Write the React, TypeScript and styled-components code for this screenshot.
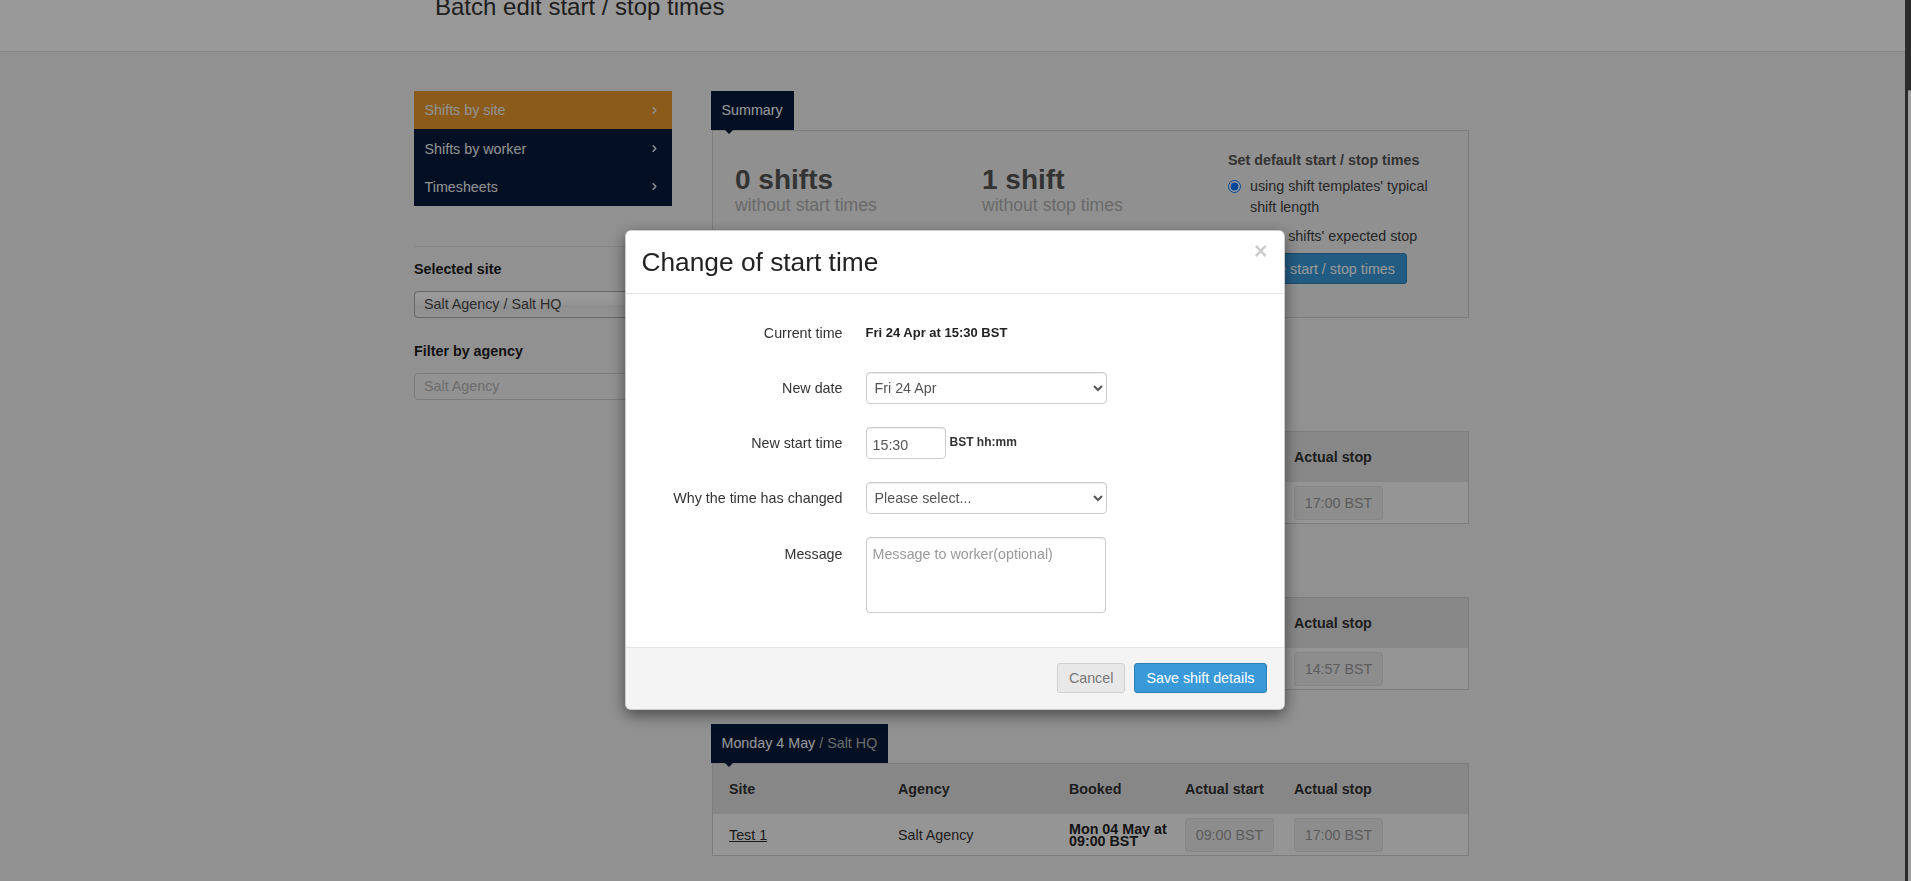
import React from 'react';
import styled, { createGlobalStyle } from 'styled-components';
import { ChevronRight } from 'lucide-react';

const NAVY = '#05193a';
const ORANGE = '#e6982e';

const GlobalStyle = createGlobalStyle`
  * {
    box-sizing: border-box;
  }
  body {
    margin: 0;
    background: #f2f2f2;
    font-family: "Liberation Sans", Arial, sans-serif;
    font-size: 14.3px;
    line-height: 20px;
    color: #333;
  }
`;

const TopBar = styled.header`
  height: 52px;
  background: #fff;
  border-bottom: 1px solid #e2e2e2;
  overflow: hidden;
`;

const PageTitle = styled.h1`
  margin: -5px 0 0 435px;
  font-size: 24px;
  line-height: 24px;
  font-weight: normal;
  color: #333;
`;

const Layout = styled.div`
  display: flex;
  gap: 40px;
  width: 1055px;
  margin-left: 414px;
  padding: 39px 0 25px;
`;

const Sidebar = styled.aside`
  width: 258px;
  flex-shrink: 0;
`;

const NavList = styled.nav`
  display: flex;
  flex-direction: column;
  background: ${NAVY};
`;

const NavItem = styled.a<{ $active?: boolean }>`
  display: flex;
  align-items: center;
  justify-content: space-between;
  height: 38.4px;
  padding: 0 12px 0 10.5px;
  background: ${({ $active }) => ($active ? ORANGE : NAVY)};
  color: #f4f4f4;
  text-decoration: none;
`;

const Divider = styled.hr`
  margin: 40px 0 0;
  border: 0;
  border-top: 1px solid #e0e0e0;
`;

const FieldLabel = styled.div<{ $gap: number }>`
  margin-top: ${({ $gap }) => $gap}px;
  font-weight: bold;
  color: #1c1c1c;
`;

const ChooserBox = styled.div<{ $disabled?: boolean }>`
  margin-top: 12px;
  height: 27px;
  padding: 0 9px;
  line-height: 25px;
  border: 1px solid ${({ $disabled }) => ($disabled ? '#cfcfcf' : '#aaa')};
  border-radius: 4px;
  background: ${({ $disabled }) =>
    $disabled
      ? '#f4f4f4'
      : 'linear-gradient(#fff 20%, #f6f6f6 50%, #eee 52%, #f4f4f4 100%)'};
  color: ${({ $disabled }) => ($disabled ? '#b4b4b4' : '#4a4a4a')};
`;

const Main = styled.main`
  flex: 1;
  display: flex;
  flex-direction: column;
`;

const TabLabel = styled.div`
  position: relative;
  align-self: flex-start;
  height: 39px;
  line-height: 39px;
  margin-left: -1px;
  padding: 0 11px 0 10.5px;
  background: ${NAVY};
  color: #fff;

  &::after {
    content: '';
    position: absolute;
    left: 14px;
    bottom: -4px;
    border-left: 4px solid transparent;
    border-right: 4px solid transparent;
    border-top: 4px solid ${NAVY};
  }
`;

const TabMuted = styled.span`
  color: #b5b5b5;
`;

const Section = styled.section<{ $gap: number }>`
  display: flex;
  flex-direction: column;
  margin-top: ${({ $gap }) => $gap}px;
`;

const SummaryPanel = styled.div`
  display: grid;
  grid-template-columns: 247px 246px 1fr;
  padding: 19px 22px 33px;
  border: 1px solid #d0d0d0;
  background: #f0f0f0;
`;

const Stat = styled.div`
  margin-top: 14px;
`;

const StatValue = styled.div`
  font-size: 28px;
  line-height: 31px;
  font-weight: bold;
  color: #555;
`;

const StatCaption = styled.div`
  font-size: 17.6px;
  line-height: 20px;
  color: #b0b0b0;
`;

const DefaultsColumn = styled.div`
  display: flex;
  flex-direction: column;
`;

const DefaultsHeading = styled.div`
  font-weight: bold;
  color: #555;
`;

const RadioOption = styled.label<{ $gap: number }>`
  display: flex;
  align-items: flex-start;
  gap: 9px;
  margin-top: ${({ $gap }) => $gap}px;
  line-height: 21px;
  color: #404040;

  input {
    width: 13px;
    height: 13px;
    margin: 4px 0 0;
    flex-shrink: 0;
  }
`;

const ActionButton = styled.button`
  align-self: flex-start;
  margin-top: 6px;
  height: 31px;
  padding: 0 11px;
  border: 1px solid #2d7fb4;
  border-radius: 3px;
  background: #3a9ad9;
  color: #fff;
  font: inherit;
`;

const Table = styled.div`
  border: 1px solid #d0d0d0;
  background: #f9f9f9;
`;

const TableRow = styled.div<{ $head?: boolean }>`
  display: grid;
  grid-template-columns: 169px 171px 116px 109px 1fr;
  align-items: center;
  height: ${({ $head }) => ($head ? '50px' : '41px')};
  padding-left: 16px;
  background: ${({ $head }) => ($head ? '#e2e2e2' : '#f9f9f9')};
  font-weight: ${({ $head }) => ($head ? 'bold' : 'normal')};
  color: #333;
`;

const SiteLink = styled.a`
  color: #2c2c2c;
  text-decoration: underline;
`;

const BookedCell = styled.div`
  padding-right: 8px;
  font-weight: bold;
  line-height: 12px;
  color: #222;
`;

const TimeBox = styled.div`
  display: flex;
  align-items: center;
  justify-content: center;
  width: 89px;
  height: 34px;
  border: 1px solid #e0e0e0;
  border-radius: 3px;
  background: #ebebeb;
  color: #9a9a9a;
`;

/* window scrollbar, drawn above the backdrop */

const ScrollTrack = styled.div`
  position: fixed;
  top: 0;
  right: 0;
  bottom: 0;
  width: 6px;
  background: #2b2b2b;
  z-index: 20;
`;

const ScrollThumb = styled.div`
  width: 3px;
  height: 100%;
  margin: 90px 0 0 3px;
  border-radius: 2px 2px 0 0;
  background: #9e9e9e;
`;

/* modal */

const Backdrop = styled.div`
  position: fixed;
  inset: 0;
  background: rgba(0, 0, 0, 0.4);
  z-index: 10;
`;

const Dialog = styled.div`
  width: 660px;
  margin: 230px 0 0 calc(50% - 331px);
  background: #fff;
  border: 1px solid rgba(0, 0, 0, 0.2);
  border-radius: 6px;
  box-shadow: 0 5px 15px rgba(0, 0, 0, 0.5);
  overflow: hidden;
`;

const DialogHeader = styled.div`
  display: flex;
  align-items: flex-start;
  justify-content: space-between;
  padding: 17px 16px 16px;
  border-bottom: 1px solid #e5e5e5;
`;

const DialogTitle = styled.h4`
  margin: 0;
  font-size: 26.3px;
  line-height: 29px;
  font-weight: normal;
  color: #222;
`;

const CloseButton = styled.button`
  margin-top: -8px;
  padding: 0;
  border: 0;
  background: none;
  font-family: inherit;
  font-size: 23px;
  line-height: 1;
  font-weight: bold;
  color: #000;
  opacity: 0.2;
`;

const DialogBody = styled.div`
  display: grid;
  grid-template-columns: 200px 1fr;
  column-gap: 23px;
  row-gap: 23px;
  padding: 23px 16px 29px 17px;
`;

const FormLabel = styled.label<{ $top?: boolean }>`
  align-self: ${({ $top }) => ($top ? 'start' : 'center')};
  padding-top: ${({ $top }) => ($top ? '7px' : '0')};
  text-align: right;
  color: #333;
`;

const FormControl = styled.div`
  display: flex;
  align-items: center;
  min-height: 32px;
`;

const CurrentValue = styled.span`
  font-size: 13px;
  font-weight: bold;
  color: #222;
`;

const Select = styled.select`
  width: 241px;
  height: 32px;
  padding: 0 6px 0 4px;
  border: 1px solid #ccc;
  border-radius: 4px;
  background: #fff;
  font-family: inherit;
  font-size: 14.3px;
  color: #555;
  box-shadow: inset 0 1px 1px rgba(0, 0, 0, 0.075);
`;

const TimeInput = styled.input`
  width: 80px;
  height: 32px;
  padding: 4px 6px 0;
  border: 1px solid #ccc;
  border-radius: 4px;
  font-family: inherit;
  font-size: 14.3px;
  color: #555;
  box-shadow: inset 0 1px 1px rgba(0, 0, 0, 0.075);
`;

const TimeHint = styled.span`
  margin: -2px 0 0 4px;
  font-size: 12px;
  font-weight: bold;
  color: #333;
`;

const MessageInput = styled.textarea`
  width: 240px;
  height: 76px;
  padding: 6px;
  border: 1px solid #ccc;
  border-radius: 4px;
  resize: none;
  font-family: inherit;
  font-size: 14.3px;
  line-height: 20px;
  color: #555;
  box-shadow: inset 0 1px 1px rgba(0, 0, 0, 0.075);

  &::placeholder {
    color: #999;
  }
`;

const DialogFooter = styled.div`
  display: flex;
  justify-content: flex-end;
  gap: 9px;
  padding: 15px 17px 16px;
  border-top: 1px solid #e5e5e5;
  background: #f4f4f4;
`;

const Button = styled.button<{ $primary?: boolean }>`
  height: 30px;
  padding: 0 11px;
  border: 1px solid ${({ $primary }) => ($primary ? '#2d7fb4' : '#cfcfcf')};
  border-radius: 3px;
  background: ${({ $primary }) => ($primary ? '#3a9ad9' : '#e8e8e8')};
  color: ${({ $primary }) => ($primary ? '#fff' : '#777')};
  font-family: inherit;
  font-size: 14.3px;
`;

type Shift = {
  day: string;
  site: string;
  booked: string;
  start: string;
  stop: string;
};

const shifts: Shift[] = [
  { day: 'Friday 24 Apr', site: 'Test 1', booked: 'Fri 24 Apr at 15:30 BST', start: '15:30 BST', stop: '17:00 BST' },
  { day: 'Friday 1 May', site: 'Test 1', booked: 'Fri 01 May at 09:00 BST', start: '09:00 BST', stop: '14:57 BST' },
  { day: 'Monday 4 May', site: 'Test 1', booked: 'Mon 04 May at 09:00 BST', start: '09:00 BST', stop: '17:00 BST' },
];

const navItems = ['Shifts by site', 'Shifts by worker', 'Timesheets'];

const ShiftSection: React.FC<{ shift: Shift; gap: number }> = ({ shift, gap }) => (
  <Section $gap={gap}>
    <TabLabel>
      {shift.day} <TabMuted>/ Salt HQ</TabMuted>
    </TabLabel>
    <Table>
      <TableRow $head>
        <div>Site</div>
        <div>Agency</div>
        <div>Booked</div>
        <div>Actual start</div>
        <div>Actual stop</div>
      </TableRow>
      <TableRow>
        <div>
          <SiteLink href="#">{shift.site}</SiteLink>
        </div>
        <div>Salt Agency</div>
        <BookedCell>{shift.booked}</BookedCell>
        <div>
          <TimeBox>{shift.start}</TimeBox>
        </div>
        <div>
          <TimeBox>{shift.stop}</TimeBox>
        </div>
      </TableRow>
    </Table>
  </Section>
);

const ChangeStartTimeModal: React.FC = () => (
  <Backdrop>
    <Dialog>
      <DialogHeader>
        <DialogTitle>Change of start time</DialogTitle>
        <CloseButton>×</CloseButton>
      </DialogHeader>
      <DialogBody>
        <FormLabel>Current time</FormLabel>
        <FormControl>
          <CurrentValue>Fri 24 Apr at 15:30 BST</CurrentValue>
        </FormControl>

        <FormLabel>New date</FormLabel>
        <FormControl>
          <Select defaultValue="2020-04-24">
            <option value="2020-04-24">Fri 24 Apr</option>
            <option value="2020-04-25">Sat 25 Apr</option>
          </Select>
        </FormControl>

        <FormLabel>New start time</FormLabel>
        <FormControl>
          <TimeInput defaultValue="15:30" />
          <TimeHint>BST hh:mm</TimeHint>
        </FormControl>

        <FormLabel>Why the time has changed</FormLabel>
        <FormControl>
          <Select defaultValue="">
            <option value="">Please select...</option>
            <option value="late">Worker arrived late</option>
            <option value="early">Worker arrived early</option>
          </Select>
        </FormControl>

        <FormLabel $top>Message</FormLabel>
        <div>
          <MessageInput placeholder="Message to worker(optional)" />
        </div>
      </DialogBody>
      <DialogFooter>
        <Button>Cancel</Button>
        <Button $primary>Save shift details</Button>
      </DialogFooter>
    </Dialog>
  </Backdrop>
);

const App: React.FC = () => {
  return (
    <>
      <GlobalStyle />
      <TopBar>
        <PageTitle>Batch edit start / stop times</PageTitle>
      </TopBar>

      <Layout>
        <Sidebar>
          <NavList>
            {navItems.map((item, i) => (
              <NavItem key={item} href="#" $active={i === 0}>
                {item}
                <ChevronRight size={11} strokeWidth={3.2} />
              </NavItem>
            ))}
          </NavList>
          <Divider />
          <FieldLabel $gap={12}>Selected site</FieldLabel>
          <ChooserBox>Salt Agency / Salt HQ</ChooserBox>
          <FieldLabel $gap={23}>Filter by agency</FieldLabel>
          <ChooserBox $disabled>Salt Agency</ChooserBox>
        </Sidebar>

        <Main>
          <Section $gap={0}>
            <TabLabel>Summary</TabLabel>
            <SummaryPanel>
              <Stat>
                <StatValue>0 shifts</StatValue>
                <StatCaption>without start times</StatCaption>
              </Stat>
              <Stat>
                <StatValue>1 shift</StatValue>
                <StatCaption>without stop times</StatCaption>
              </Stat>
              <DefaultsColumn>
                <DefaultsHeading>Set default start / stop times</DefaultsHeading>
                <RadioOption $gap={6}>
                  <input type="radio" name="defaults" defaultChecked />
                  <span>using shift templates' typical shift length</span>
                </RadioOption>
                <RadioOption $gap={8}>
                  <input type="radio" name="defaults" />
                  <span>using shifts' expected stop</span>
                </RadioOption>
                <ActionButton>Update start / stop times</ActionButton>
              </DefaultsColumn>
            </SummaryPanel>
          </Section>

          {shifts.map((shift, i) => (
            <ShiftSection key={shift.day} shift={shift} gap={i === 0 ? 74 : 34} />
          ))}
        </Main>
      </Layout>

      <ChangeStartTimeModal />
      <ScrollTrack>
        <ScrollThumb />
      </ScrollTrack>
    </>
  );
};

export default App;
